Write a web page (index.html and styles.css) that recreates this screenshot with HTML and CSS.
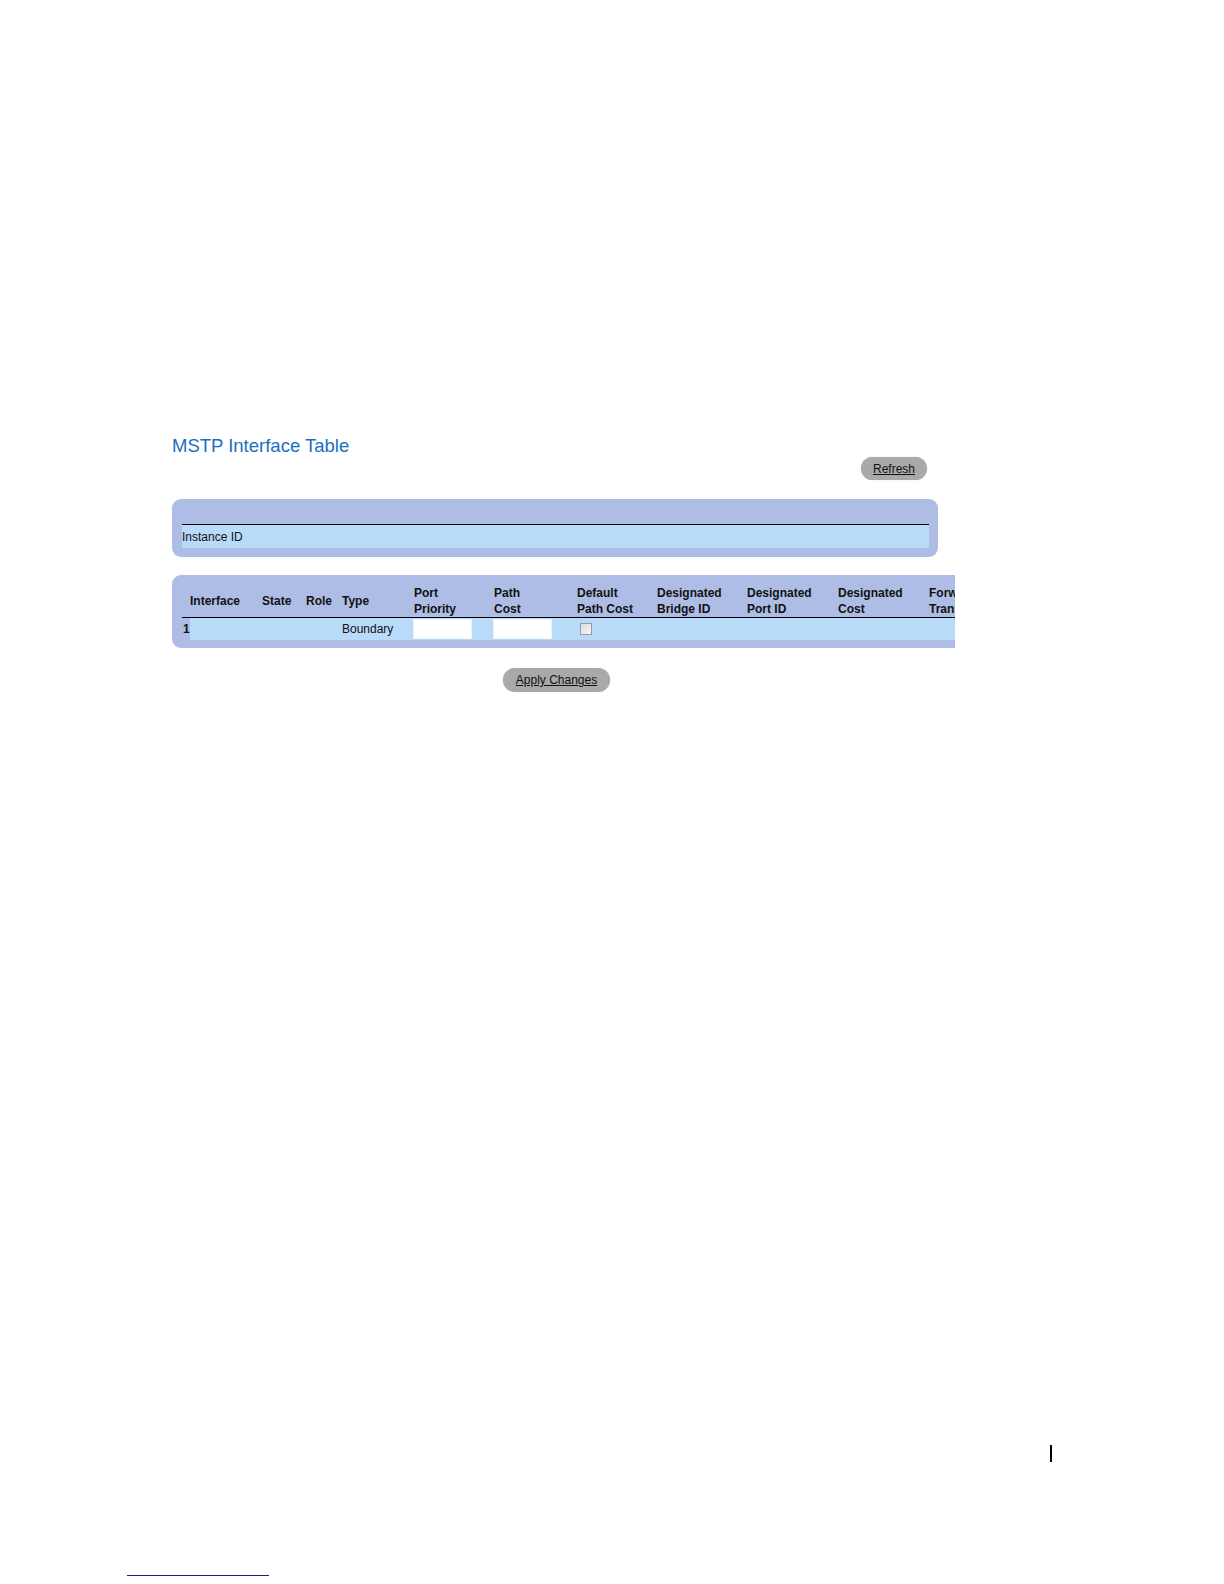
FILE: index.html
```html
<!DOCTYPE html>
<html lang="en">
<head>
<meta charset="utf-8">
<title>MSTP Interface Table</title>
<link rel="stylesheet" href="styles.css">
</head>
<body>
<main class="app">
  <h1 class="title">MSTP Interface Table</h1>
  <div class="toolbar">
    <button class="btn btn-refresh" type="button">Refresh</button>
  </div>

  <div class="panel instance">
    <div class="inst-row">
      <span>Instance ID</span>
    </div>
  </div>

  <div class="clip">
    <div class="panel ports">
      <div class="grid head">
        <div class="c"></div>
        <div class="c">Interface</div>
        <div class="c">State</div>
        <div class="c">Role</div>
        <div class="c">Type</div>
        <div class="c">Port<br>Priority</div>
        <div class="c">Path<br>Cost</div>
        <div class="c">Default<br>Path Cost</div>
        <div class="c">Designated<br>Bridge ID</div>
        <div class="c">Designated<br>Port ID</div>
        <div class="c">Designated<br>Cost</div>
        <div class="c nowrap">Forward<br>Transitions</div>
      </div>
      <div class="grid row">
        <div class="c idx">1</div>
        <div class="c lt"></div>
        <div class="c lt"></div>
        <div class="c lt"></div>
        <div class="c lt">Boundary</div>
        <div class="c lt"><input class="field" type="text"></div>
        <div class="c lt"><input class="field" type="text"></div>
        <div class="c lt"><input class="check" type="checkbox"></div>
        <div class="c lt"></div>
        <div class="c lt"></div>
        <div class="c lt"></div>
        <div class="c lt"></div>
      </div>
    </div>
  </div>

  <div class="actions">
    <button class="btn btn-apply" type="button">Apply Changes</button>
  </div>
</main>

<footer class="doc-footer">
  <div class="pagebar"><span class="bar"></span></div>
  <div class="footnote-rule"></div>
</footer>
</body>
</html>
```

FILE: styles.css
```css
html, body {
  margin: 0;
  padding: 0;
  background: #ffffff;
}

body {
  font-family: "Liberation Sans", Arial, sans-serif;
  font-size: 12px;
  color: #111111;
}

.app {
  width: 766px;
  padding: 435px 0 0 172px;
}

.title {
  margin: 0;
  font-size: 18.5px;
  line-height: 21px;
  font-weight: normal;
  color: #1c6fc0;
}

.toolbar {
  display: flex;
  justify-content: flex-end;
  margin-top: 1px;
  padding-right: 11px;
}

.btn {
  display: inline-flex;
  align-items: center;
  justify-content: center;
  border: none;
  background: #a9a9a9;
  border-radius: 12px;
  font-family: "Liberation Sans", Arial, sans-serif;
  font-size: 12px;
  color: #111111;
  text-decoration: underline;
  cursor: pointer;
  box-shadow: 0 0 1px rgba(0, 0, 0, 0.25);
}

.btn-refresh {
  height: 23px;
  padding: 0 12px;
}

.btn-apply {
  height: 24px;
  padding: 0 13px;
}

.panel {
  background: #aebde6;
  border-radius: 9px;
}

.instance {
  margin-top: 19px;
  padding: 25px 9px 9px 10px;
}

.inst-row {
  border-top: 1px solid #000000;
  background: #b9dbfa;
  height: 23px;
  display: flex;
  align-items: center;
}

.clip {
  margin-top: 18px;
  width: 783px;
  overflow: hidden;
}

.ports {
  width: 1040px;
  padding: 10px 0 8px 10px;
}

.grid {
  display: grid;
  grid-template-columns: 8px 72px 44px 36px 72px 80px 83px 80px 90px 91px 91px 200px;
}

.head {
  height: 32px;
  align-items: center;
  font-weight: bold;
  line-height: 16px;
}

.nowrap {
  white-space: nowrap;
}

.row {
  border-top: 1px solid #000000;
  height: 22px;
}

.row .c {
  display: flex;
  align-items: center;
}

.idx {
  font-weight: bold;
  padding-left: 1px;
}

.lt {
  background: #b9dbfa;
}

.field {
  box-sizing: border-box;
  width: 59px;
  height: 20px;
  margin: 0 0 0 -1px;
  border: 1px solid #eef3fa;
  background: #ffffff;
  padding: 0;
}

.check {
  appearance: none;
  -webkit-appearance: none;
  box-sizing: border-box;
  width: 12px;
  height: 12px;
  margin: 0 0 0 3px;
  border: 1px solid #9c9c9c;
  background: linear-gradient(135deg, #dcdcdc, #f7f7f7);
}

.actions {
  display: flex;
  justify-content: center;
  margin-top: 20px;
  padding-left: 3px;
}

.doc-footer {
  margin-top: 753px;
}

.pagebar {
  display: flex;
  justify-content: flex-end;
  padding-right: 172px;
}

.bar {
  display: block;
  width: 2px;
  height: 17px;
  background: #000000;
}

.footnote-rule {
  margin: 113px 0 0 127px;
  width: 142px;
  height: 1px;
  background: #1a1a9a;
}
```
